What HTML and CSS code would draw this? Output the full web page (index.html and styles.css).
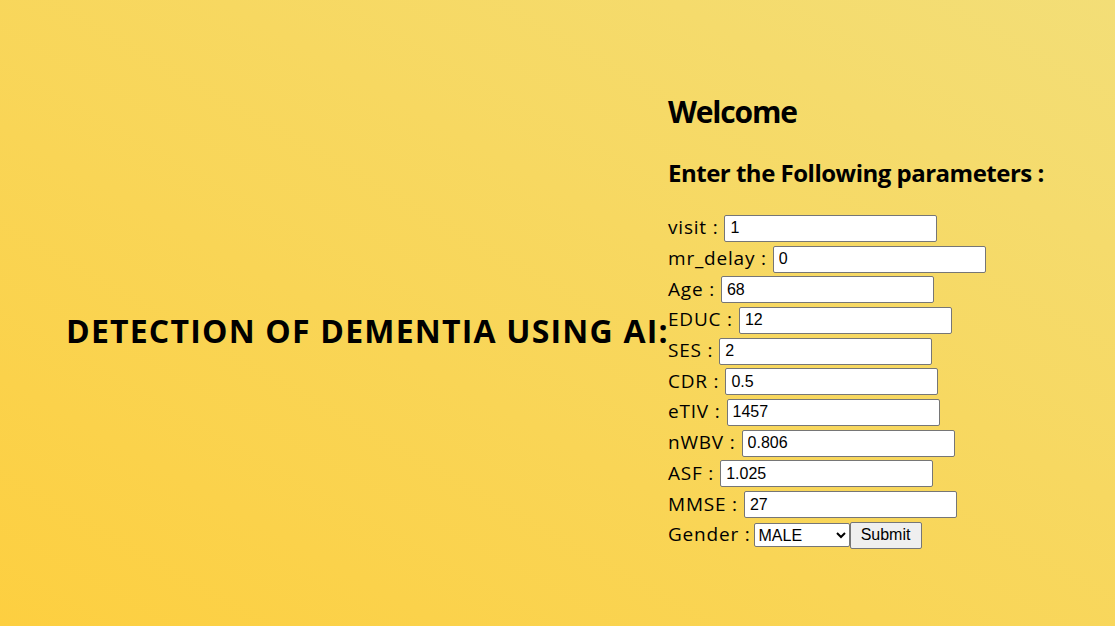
FILE: index.html
```html
<!DOCTYPE html>
<html lang="en">
<head>
<meta charset="utf-8">
<title>Detection of Dementia using AI</title>
<link rel="stylesheet" href="styles.css">
</head>
<body>
<main class="page">
  <h1 class="title">DETECTION OF DEMENTIA USING AI:</h1>
  <section class="panel">
    <h1 class="welcome">Welcome</h1>
    <h2 class="prompt">Enter the Following parameters :</h2>
    <form class="fields">
      <div class="row"><label for="visit">visit :</label><input id="visit" type="text" value="1"></div>
      <div class="row"><label for="mr_delay">mr_delay :</label><input id="mr_delay" type="text" value="0"></div>
      <div class="row"><label for="age">Age :</label><input id="age" type="text" value="68"></div>
      <div class="row"><label for="educ">EDUC :</label><input id="educ" type="text" value="12"></div>
      <div class="row"><label for="ses">SES :</label><input id="ses" type="text" value="2"></div>
      <div class="row"><label for="cdr">CDR :</label><input id="cdr" type="text" value="0.5"></div>
      <div class="row"><label for="etiv">eTIV :</label><input id="etiv" type="text" value="1457"></div>
      <div class="row"><label for="nwbv">nWBV :</label><input id="nwbv" type="text" value="0.806"></div>
      <div class="row"><label for="asf">ASF :</label><input id="asf" type="text" value="1.025"></div>
      <div class="row"><label for="mmse">MMSE :</label><input id="mmse" type="text" value="27"></div>
      <div class="row"><label for="gender">Gender :</label><select id="gender"><option>MALE</option><option>FEMALE</option></select><button type="submit">Submit</button></div>
    </form>
  </section>
</main>
</body>
</html>
```

FILE: styles.css
```css
html, body {
  margin: 0;
  height: 100%;
}

body {
  background: linear-gradient(to top right, #fdcf40, #f3de77);
  font-family: "Open Sans", "DejaVu Sans", sans-serif;
  color: #000;
}

.page {
  display: flex;
  align-items: flex-start;
  box-sizing: border-box;
  height: 626px;
  padding-left: 66px;
}

.title {
  flex: none;
  width: 602px;
  margin: 312px 0 0;
  white-space: nowrap;
  font-size: 32px;
  line-height: 38px;
  font-weight: 700;
  letter-spacing: 1.2px;
}

.panel {
  padding-top: 92px;
}

.welcome {
  margin: 0;
  font-size: 30px;
  line-height: 39px;
  font-weight: 700;
  letter-spacing: -1.2px;
}

.prompt {
  margin: 28px 0 0;
  font-size: 24px;
  line-height: 28px;
  font-weight: 700;
  letter-spacing: -0.5px;
}

.fields {
  margin-top: 26px;
  display: flex;
  flex-direction: column;
}

.row {
  display: flex;
  align-items: center;
  gap: 6px;
  height: 30.7px;
}

.row label {
  font-size: 19px;
  line-height: 22px;
  letter-spacing: 0.8px;
  padding-bottom: 2px;
}

.row input {
  box-sizing: border-box;
  width: 213px;
  height: 27px;
  margin: 0;
  padding: 0 5px;
  border: 1px solid #767676;
  border-radius: 2px;
  background: #fff;
  font-family: "Liberation Sans", Arial, sans-serif;
  font-size: 16px;
  color: #000;
}

.row select {
  box-sizing: border-box;
  width: 96px;
  height: 24px;
  margin: 0 0 0 -3px;
  border: 1px solid #767676;
  border-radius: 2px;
  background: #fff;
  font-family: "Liberation Sans", Arial, sans-serif;
  font-size: 16px;
  color: #000;
}

.row button {
  box-sizing: border-box;
  width: 72px;
  height: 27px;
  margin: 0 0 0 -6px;
  padding: 0;
  border: 1px solid #767676;
  border-radius: 2px;
  background: #efefef;
  font-family: "Liberation Sans", Arial, sans-serif;
  font-size: 16px;
  color: #000;
}
```
